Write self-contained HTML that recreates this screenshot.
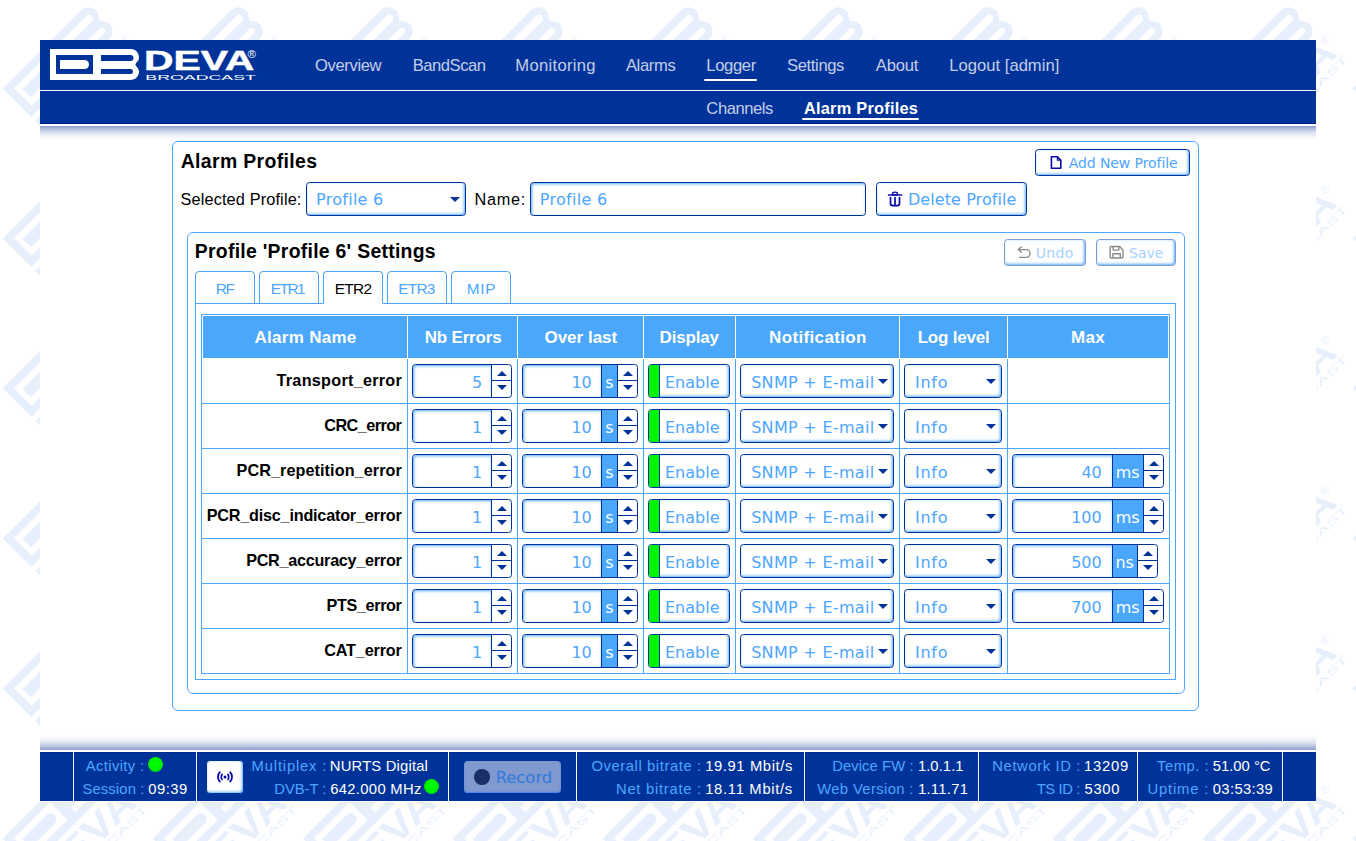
<!DOCTYPE html>
<html lang="en"><head><meta charset="utf-8"><title>Alarm Profiles</title>
<style>
*{box-sizing:border-box;margin:0;padding:0}
html,body{width:1356px;height:841px;overflow:hidden;background:#fff}
body{position:relative;font-family:"Liberation Sans",sans-serif;font-size:16px;color:#000}
.a{position:absolute}
.t{position:absolute;white-space:nowrap;line-height:1}
.dj{font-family:"DejaVu Sans","Liberation Sans",sans-serif}
b{font-weight:bold}
#wm{position:absolute;left:0;top:0;width:1356px;height:841px}
#main{position:absolute;left:40px;top:40px;width:1276px;height:762px;background:#fff}
#hdr{position:absolute;left:40px;top:40px;width:1276px;height:84px;background:#003399}
.box{position:absolute;border:1px solid #4da6ff;background:#fff}
.ctl{position:absolute;border:1px solid #003399;border-radius:3.5px;background:#fff;box-shadow:inset -1px -1px 3px rgba(77,166,255,.95);height:34px;overflow:hidden}
.inp{box-shadow:inset 1px 1px 3px rgba(77,166,255,.95)}
.spn{box-shadow:none}
.spi{position:absolute;left:0;top:0;height:32px;border-radius:3px 0 0 3px;box-shadow:inset 1px 1px 3px rgba(77,166,255,.95)}
.arr{position:absolute;width:0;height:0;border-left:5px solid transparent;border-right:5px solid transparent}
.up{border-bottom:5.5px solid #003399}
.dn{border-top:5.5px solid #003399}
.th{position:absolute;top:316px;height:42px;background:#4ba7fb}
.vl{position:absolute;width:1px;background:#4da6ff}
.hl{position:absolute;height:1px;background:#4da6ff}
.unit{position:absolute;top:0;height:32px;background:#4ba7fb;border-left:1px solid #003399;border-right:1px solid #003399}
#ftr{position:absolute;left:40px;top:752px;width:1276px;height:49px;background:#003399;border-top:1px solid #002890}
.fs{position:absolute;top:-1px;width:1px;height:49px;background:#fff}
.led{position:absolute;border-radius:50%;background:radial-gradient(circle at 50% 45%,#00ff00 0%,#00f200 50%,#00c400 100%)}
</style></head>
<body>
<svg id="wm" width="1356" height="841" viewBox="0 0 1356 841">
<defs><pattern id="wp" width="150" height="150" patternUnits="userSpaceOnUse"><g transform="translate(-147.3,-61.599999999999994) rotate(-45)" fill="#e7effc">
<g transform="scale(1.37,1.31)"><path fill-rule="evenodd" d="M0,0 H80 a8.5,8 0 0 1 6,13.6 l-1.2,1.9 l1.2,1.9 a8.5,8 0 0 1 -6,13.6 H0 z M6,6 V25 H43 V6 z M51,6 V12 H80.5 a3,3 0 0 0 0,-6 z M51,20 V25 H80.5 a2.5,2.5 0 0 0 0,-5 z"/>
<path d="M10,11 H34.5 a4.5,4.5 0 0 1 0,9 H10 z"/></g>
<text x="-3" y="72" font-family="Liberation Sans,sans-serif" font-weight="bold" font-size="37.7" textLength="123" lengthAdjust="spacingAndGlyphs">DEVA</text>
<text x="-1" y="82.5" font-family="Liberation Sans,sans-serif" font-size="9.8" textLength="124" lengthAdjust="spacingAndGlyphs">BROADCAST</text>
<text x="116.5" y="56" font-family="Liberation Sans,sans-serif" font-size="11">®</text></g><g transform="translate(-147.3,88.4) rotate(-45)" fill="#e7effc">
<g transform="scale(1.37,1.31)"><path fill-rule="evenodd" d="M0,0 H80 a8.5,8 0 0 1 6,13.6 l-1.2,1.9 l1.2,1.9 a8.5,8 0 0 1 -6,13.6 H0 z M6,6 V25 H43 V6 z M51,6 V12 H80.5 a3,3 0 0 0 0,-6 z M51,20 V25 H80.5 a2.5,2.5 0 0 0 0,-5 z"/>
<path d="M10,11 H34.5 a4.5,4.5 0 0 1 0,9 H10 z"/></g>
<text x="-3" y="72" font-family="Liberation Sans,sans-serif" font-weight="bold" font-size="37.7" textLength="123" lengthAdjust="spacingAndGlyphs">DEVA</text>
<text x="-1" y="82.5" font-family="Liberation Sans,sans-serif" font-size="9.8" textLength="124" lengthAdjust="spacingAndGlyphs">BROADCAST</text>
<text x="116.5" y="56" font-family="Liberation Sans,sans-serif" font-size="11">®</text></g><g transform="translate(-147.3,238.4) rotate(-45)" fill="#e7effc">
<g transform="scale(1.37,1.31)"><path fill-rule="evenodd" d="M0,0 H80 a8.5,8 0 0 1 6,13.6 l-1.2,1.9 l1.2,1.9 a8.5,8 0 0 1 -6,13.6 H0 z M6,6 V25 H43 V6 z M51,6 V12 H80.5 a3,3 0 0 0 0,-6 z M51,20 V25 H80.5 a2.5,2.5 0 0 0 0,-5 z"/>
<path d="M10,11 H34.5 a4.5,4.5 0 0 1 0,9 H10 z"/></g>
<text x="-3" y="72" font-family="Liberation Sans,sans-serif" font-weight="bold" font-size="37.7" textLength="123" lengthAdjust="spacingAndGlyphs">DEVA</text>
<text x="-1" y="82.5" font-family="Liberation Sans,sans-serif" font-size="9.8" textLength="124" lengthAdjust="spacingAndGlyphs">BROADCAST</text>
<text x="116.5" y="56" font-family="Liberation Sans,sans-serif" font-size="11">®</text></g><g transform="translate(2.7,-61.599999999999994) rotate(-45)" fill="#e7effc">
<g transform="scale(1.37,1.31)"><path fill-rule="evenodd" d="M0,0 H80 a8.5,8 0 0 1 6,13.6 l-1.2,1.9 l1.2,1.9 a8.5,8 0 0 1 -6,13.6 H0 z M6,6 V25 H43 V6 z M51,6 V12 H80.5 a3,3 0 0 0 0,-6 z M51,20 V25 H80.5 a2.5,2.5 0 0 0 0,-5 z"/>
<path d="M10,11 H34.5 a4.5,4.5 0 0 1 0,9 H10 z"/></g>
<text x="-3" y="72" font-family="Liberation Sans,sans-serif" font-weight="bold" font-size="37.7" textLength="123" lengthAdjust="spacingAndGlyphs">DEVA</text>
<text x="-1" y="82.5" font-family="Liberation Sans,sans-serif" font-size="9.8" textLength="124" lengthAdjust="spacingAndGlyphs">BROADCAST</text>
<text x="116.5" y="56" font-family="Liberation Sans,sans-serif" font-size="11">®</text></g><g transform="translate(2.7,88.4) rotate(-45)" fill="#e7effc">
<g transform="scale(1.37,1.31)"><path fill-rule="evenodd" d="M0,0 H80 a8.5,8 0 0 1 6,13.6 l-1.2,1.9 l1.2,1.9 a8.5,8 0 0 1 -6,13.6 H0 z M6,6 V25 H43 V6 z M51,6 V12 H80.5 a3,3 0 0 0 0,-6 z M51,20 V25 H80.5 a2.5,2.5 0 0 0 0,-5 z"/>
<path d="M10,11 H34.5 a4.5,4.5 0 0 1 0,9 H10 z"/></g>
<text x="-3" y="72" font-family="Liberation Sans,sans-serif" font-weight="bold" font-size="37.7" textLength="123" lengthAdjust="spacingAndGlyphs">DEVA</text>
<text x="-1" y="82.5" font-family="Liberation Sans,sans-serif" font-size="9.8" textLength="124" lengthAdjust="spacingAndGlyphs">BROADCAST</text>
<text x="116.5" y="56" font-family="Liberation Sans,sans-serif" font-size="11">®</text></g><g transform="translate(2.7,238.4) rotate(-45)" fill="#e7effc">
<g transform="scale(1.37,1.31)"><path fill-rule="evenodd" d="M0,0 H80 a8.5,8 0 0 1 6,13.6 l-1.2,1.9 l1.2,1.9 a8.5,8 0 0 1 -6,13.6 H0 z M6,6 V25 H43 V6 z M51,6 V12 H80.5 a3,3 0 0 0 0,-6 z M51,20 V25 H80.5 a2.5,2.5 0 0 0 0,-5 z"/>
<path d="M10,11 H34.5 a4.5,4.5 0 0 1 0,9 H10 z"/></g>
<text x="-3" y="72" font-family="Liberation Sans,sans-serif" font-weight="bold" font-size="37.7" textLength="123" lengthAdjust="spacingAndGlyphs">DEVA</text>
<text x="-1" y="82.5" font-family="Liberation Sans,sans-serif" font-size="9.8" textLength="124" lengthAdjust="spacingAndGlyphs">BROADCAST</text>
<text x="116.5" y="56" font-family="Liberation Sans,sans-serif" font-size="11">®</text></g></pattern></defs>
<rect width="1356" height="841" fill="url(#wp)"/></svg>
<div id="main"></div>
<div id="hdr">
<div class="a" style="left:0;top:50px;width:1276px;height:1px;background:#fff"></div>
<svg class="a" style="left:0;top:0" width="240" height="50" viewBox="40 40 240 50">
<path fill="#fff" fill-rule="evenodd" d="M50,49 H130.5 a8.5,8 0 0 1 6,13.6 l-1.2,1.9 l1.2,1.9 a8.5,8 0 0 1 -6,13.6 H50 z
 M56,55 V74 H93 V55 z
 M101,55 V61 H130.5 a3,3 0 0 0 0,-6 z
 M101,69 V74 H130.5 a2.5,2.5 0 0 0 0,-5 z"/>
<path fill="#fff" d="M60,60 H84.5 a4.5,4.5 0 0 1 0,9 H60 z"/>
<text x="143.9" y="70" fill="#fff" stroke="#fff" stroke-width="0.5" font-family="Liberation Sans,sans-serif" font-weight="bold" font-size="27.3" textLength="110.5" lengthAdjust="spacingAndGlyphs">DEVA</text>
<text x="145.3" y="79.7" fill="#fff" font-family="Liberation Sans,sans-serif" font-size="7.4" textLength="110.6" lengthAdjust="spacingAndGlyphs">BROADCAST</text>
<text x="247.4" y="58" fill="#fff" font-family="Liberation Sans,sans-serif" font-size="11.5">®</text>
</svg>
<span class="t" style="left:275.05px;top:18px;font-size:16.6px;letter-spacing:-0.382px;color:#c4cee9;">Overview</span>
<span class="t" style="left:372.77px;top:18px;font-size:16.6px;letter-spacing:-0.486px;color:#c4cee9;">BandScan</span>
<span class="t" style="left:475.37px;top:18px;font-size:16.6px;letter-spacing:0.300px;color:#c4cee9;">Monitoring</span>
<span class="t" style="left:585.90px;top:18px;font-size:16.6px;letter-spacing:-0.369px;color:#c4cee9;">Alarms</span>
<span class="t" style="left:666.27px;top:18px;font-size:16.6px;letter-spacing:-0.346px;color:#c4cee9;">Logger</span>
<span class="t" style="left:747.05px;top:18px;font-size:16.6px;letter-spacing:-0.369px;color:#c4cee9;">Settings</span>
<span class="t" style="left:835.80px;top:18px;font-size:16.6px;letter-spacing:-0.211px;color:#c4cee9;">About</span>
<span class="t" style="left:909.37px;top:18px;font-size:16.6px;letter-spacing:0.008px;color:#c4cee9;">Logout [admin]</span>
<div class="a" style="left:664.4px;top:39px;width:52.6px;height:2px;background:#fff;border-radius:1px"></div>
<span class="t" style="left:666.37px;top:61px;font-size:16.6px;letter-spacing:-0.446px;color:#c4cee9;">Channels</span>
<span class="t" style="left:763.89px;top:60px;font-size:16.4px;letter-spacing:0.229px;color:#fff;"><b>Alarm Profiles</b></span>
<div class="a" style="left:762.3px;top:78px;width:116.8px;height:2px;background:#fff;border-radius:1px"></div>
<div class="a" style="left:0;top:83px;width:1276px;height:1px;background:#002288"></div>
</div>
<div class="a" style="left:40px;top:126px;width:1276px;height:14px;background:linear-gradient(#8b9dcd 0,#b9c4e1 25%,#dde3f0 50%,#f2f4f9 75%,#fff 100%)"></div>
<div class="box" style="left:172px;top:141px;width:1027px;height:570px;border-radius:6px"></div>
<div class="box" style="left:187px;top:232px;width:998px;height:462px;border-radius:6px"></div>
<div class="box" style="left:195px;top:303px;width:981px;height:377px"></div>
<div class="box" style="left:201px;top:314px;width:969px;height:360px"></div>
<span class="t" style="left:180.71px;top:152px;font-size:19.4px;letter-spacing:0.371px;"><b>Alarm Profiles</b></span>
<span class="t" style="left:180.47px;top:191px;font-size:16.3px;letter-spacing:0.147px;">Selected Profile:</span>
<span class="t" style="left:474.50px;top:191px;font-size:16.3px;letter-spacing:0.696px;">Name:</span>
<span class="t" style="left:194.74px;top:242px;font-size:19.4px;letter-spacing:0.280px;"><b>Profile 'Profile 6' Settings</b></span>
<div class="ctl" style="left:306px;top:182px;width:160px;height:34px;"><span class="t dj" style="left:8.98px;top:9px;font-size:16px;letter-spacing:0.290px;color:#4da6ff;">Profile 6</span><i class="arr dn" style="left:143.2px;top:14.0px"></i></div>
<div class="ctl inp" style="left:530px;top:182px;width:336px;height:34px;"><span class="t dj" style="left:8.78px;top:9px;font-size:16px;letter-spacing:0.290px;color:#4da6ff;">Profile 6</span></div>
<div class="ctl" style="left:876px;top:182px;width:151px;height:34px;"><span class="t dj" style="left:30.98px;top:9px;font-size:16px;letter-spacing:0.075px;color:#4da6ff;">Delete Profile</span><svg class="a" style="left:10px;top:7px" width="16" height="17" viewBox="887 190 16 17"><g fill="none" stroke="#0808a8" stroke-width="1.7" stroke-linecap="round" stroke-linejoin="round"><path d="M888.6,195H901.4"/><ellipse cx="895" cy="193.6" rx="2.5" ry="1.5" stroke-width="1.4"/><path d="M890.5,197.6V203.6a2,2 0 0 0 2,2h5a2,2 0 0 0 2,-2V197.6M895,197.6V205.6"/></g></svg></div>
<div class="ctl" style="left:1035px;top:149px;width:155px;height:27px;"><span class="t dj" style="left:32.76px;top:6px;font-size:14px;letter-spacing:-0.086px;color:#4da6ff;">Add New Profile</span><svg class="a" style="left:13px;top:5px" width="14" height="16" viewBox="1049 155 14 16"><g fill="none" stroke="#0a0aa0" stroke-width="1.6" stroke-linejoin="round"><path d="M1051.4,156.7h6l3.4,3.4v8.2h-9.4z"/><path d="M1057.4,156.7v3.4h3.4" stroke-width="1.2"/></g></svg></div>
<div class="ctl" style="left:1004px;top:239px;width:82px;height:27px;border-color:#7f9ad0;"><span class="t dj" style="left:30.71px;top:6px;font-size:14px;letter-spacing:0.317px;color:#a6d2ff;">Undo</span><svg class="a" style="left:11px;top:5px" width="18" height="16" viewBox="1016 245 18 16"><path fill="none" stroke="#8a8a8a" stroke-width="1.4" stroke-linecap="round" stroke-linejoin="round" d="M1019.6,257.4h6.6a3.9,3.9 0 0 0 0,-7.8h-7.8M1021.2,246.9l-2.9,2.7l2.9,2.7"/></svg></div>
<div class="ctl" style="left:1096px;top:239px;width:80px;height:27px;border-color:#7f9ad0;"><span class="t dj" style="left:32.09px;top:6px;font-size:14px;color:#a6d2ff;">Save</span><svg class="a" style="left:11px;top:5px" width="18" height="16" viewBox="1108 245 18 16"><g fill="none" stroke="#8a8a8a" stroke-width="1.4" stroke-linejoin="round"><path d="M1111.3,246.5h8.3l3.4,3.4v6.9a1.2,1.2 0 0 1 -1.2,1.2h-10.5a1.2,1.2 0 0 1 -1.2,-1.2v-9.1a1.2,1.2 0 0 1 1.2,-1.2z"/><path d="M1113.2,246.5v3.6h5.6v-3.6M1112.9,258v-4.3h7.4v4.3"/></g></svg></div>
<div class="box" style="left:195px;top:271px;width:60px;height:33px;border-radius:4px 4px 0 0;"><span class="t" style="left:19.87px;top:9px;font-size:15.4px;letter-spacing:-1.434px;color:#4da6ff;">RF</span></div>
<div class="box" style="left:259px;top:271px;width:60px;height:33px;border-radius:4px 4px 0 0;"><span class="t" style="left:10.77px;top:9px;font-size:15.4px;letter-spacing:-1.474px;color:#4da6ff;">ETR1</span></div>
<div class="box" style="left:323px;top:271px;width:60px;height:33px;border-radius:4px 4px 0 0;border-bottom-color:#fff;"><span class="t" style="left:10.67px;top:9px;font-size:15.4px;letter-spacing:-0.648px;color:#000;">ETR2</span></div>
<div class="box" style="left:387px;top:271px;width:60px;height:33px;border-radius:4px 4px 0 0;"><span class="t" style="left:10.37px;top:9px;font-size:15.4px;letter-spacing:-0.800px;color:#4da6ff;">ETR3</span></div>
<div class="box" style="left:451px;top:271px;width:60px;height:33px;border-radius:4px 4px 0 0;"><span class="t" style="left:14.67px;top:9px;font-size:15.4px;letter-spacing:0.784px;color:#4da6ff;">MIP</span></div>
<div class="th" style="left:203px;width:204px"><span class="t" style="left:51.47px;top:13px;font-size:17px;letter-spacing:0.293px;color:#fff;"><b>Alarm Name</b></span></div>
<div class="th" style="left:408px;width:109px"><span class="t" style="left:16.69px;top:13px;font-size:17px;letter-spacing:-0.186px;color:#fff;"><b>Nb Errors</b></span></div>
<div class="th" style="left:518px;width:125px"><span class="t" style="left:26.42px;top:13px;font-size:17px;letter-spacing:0.009px;color:#fff;"><b>Over last</b></span></div>
<div class="th" style="left:644px;width:91px"><span class="t" style="left:15.60px;top:13px;font-size:17px;letter-spacing:-0.174px;color:#fff;"><b>Display</b></span></div>
<div class="th" style="left:736px;width:163px"><span class="t" style="left:33.10px;top:13px;font-size:17px;letter-spacing:0.348px;color:#fff;"><b>Notification</b></span></div>
<div class="th" style="left:900px;width:107px"><span class="t" style="left:17.69px;top:13px;font-size:17px;letter-spacing:-0.212px;color:#fff;"><b>Log level</b></span></div>
<div class="th" style="left:1008px;width:160px"><span class="t" style="left:62.99px;top:13px;font-size:17px;letter-spacing:0.363px;color:#fff;"><b>Max</b></span></div>
<div class="vl" style="left:407px;top:359px;height:314px"></div>
<div class="vl" style="left:517px;top:359px;height:314px"></div>
<div class="vl" style="left:643px;top:359px;height:314px"></div>
<div class="vl" style="left:735px;top:359px;height:314px"></div>
<div class="vl" style="left:899px;top:359px;height:314px"></div>
<div class="vl" style="left:1007px;top:359px;height:314px"></div>
<div class="hl" style="left:201px;top:403px;width:969px"></div>
<div class="hl" style="left:201px;top:448px;width:969px"></div>
<div class="hl" style="left:201px;top:493px;width:969px"></div>
<div class="hl" style="left:201px;top:538px;width:969px"></div>
<div class="hl" style="left:201px;top:583px;width:969px"></div>
<div class="hl" style="left:201px;top:628px;width:969px"></div>
<span class="t" style="left:276.54px;top:372px;font-size:16.2px;letter-spacing:0.273px;"><b>Transport_error</b></span>
<div class="ctl spn" style="left:412px;top:364px;width:100px;height:34px;"><div class="spi" style="width:78px"></div><div class="a" style="left:78px;top:0;width:1px;height:32px;background:#003399"></div><div class="a" style="left:78px;top:15px;width:21px;height:1px;background:#003399"></div><i class="arr up" style="left:84px;top:5.5px"></i><i class="arr dn" style="left:84px;top:20px"></i><span class="t dj" style="left:58.90px;top:10px;font-size:16px;color:#4da6ff;">5</span></div>
<div class="ctl spn" style="left:522px;top:364px;width:116px;height:34px;"><div class="spi" style="width:78px"></div><div class="a" style="left:94px;top:0;width:1px;height:32px;background:#003399"></div><div class="a" style="left:94px;top:15px;width:21px;height:1px;background:#003399"></div><i class="arr up" style="left:100px;top:5.5px"></i><i class="arr dn" style="left:100px;top:20px"></i><div class="unit" style="left:78px;width:17px"><span class="t dj" style="left:3.26px;top:10px;font-size:16px;color:#fff;">s</span></div><span class="t dj" style="left:48.42px;top:10px;font-size:16px;color:#4da6ff;">10</span></div>
<div class="ctl" style="left:648px;top:364px;width:82px;height:34px;"><div class="a" style="left:0;top:0;width:11px;height:32px;background:#00f600;border-right:1px solid #003399"></div><span class="t dj" style="left:15.98px;top:10px;font-size:16px;color:#4da6ff;">Enable</span></div>
<div class="ctl" style="left:740px;top:364px;width:154px;height:34px;"><span class="t dj" style="left:10.16px;top:10px;font-size:16px;letter-spacing:0.300px;color:#4da6ff;">SNMP + E-mail</span><i class="arr dn" style="left:137.3px;top:14.0px"></i></div>
<div class="ctl" style="left:904px;top:364px;width:98px;height:34px;"><span class="t dj" style="left:10.08px;top:10px;font-size:16px;letter-spacing:0.693px;color:#4da6ff;">Info</span><i class="arr dn" style="left:81.0px;top:14.0px"></i></div>
<span class="t" style="left:324.25px;top:417px;font-size:16.2px;letter-spacing:-0.535px;"><b>CRC_error</b></span>
<div class="ctl spn" style="left:412px;top:409px;width:100px;height:34px;"><div class="spi" style="width:78px"></div><div class="a" style="left:78px;top:0;width:1px;height:32px;background:#003399"></div><div class="a" style="left:78px;top:15px;width:21px;height:1px;background:#003399"></div><i class="arr up" style="left:84px;top:5.5px"></i><i class="arr dn" style="left:84px;top:20px"></i><span class="t dj" style="left:58.98px;top:10px;font-size:16px;color:#4da6ff;">1</span></div>
<div class="ctl spn" style="left:522px;top:409px;width:116px;height:34px;"><div class="spi" style="width:78px"></div><div class="a" style="left:94px;top:0;width:1px;height:32px;background:#003399"></div><div class="a" style="left:94px;top:15px;width:21px;height:1px;background:#003399"></div><i class="arr up" style="left:100px;top:5.5px"></i><i class="arr dn" style="left:100px;top:20px"></i><div class="unit" style="left:78px;width:17px"><span class="t dj" style="left:3.26px;top:10px;font-size:16px;color:#fff;">s</span></div><span class="t dj" style="left:48.42px;top:10px;font-size:16px;color:#4da6ff;">10</span></div>
<div class="ctl" style="left:648px;top:409px;width:82px;height:34px;"><div class="a" style="left:0;top:0;width:11px;height:32px;background:#00f600;border-right:1px solid #003399"></div><span class="t dj" style="left:15.98px;top:10px;font-size:16px;color:#4da6ff;">Enable</span></div>
<div class="ctl" style="left:740px;top:409px;width:154px;height:34px;"><span class="t dj" style="left:10.16px;top:10px;font-size:16px;letter-spacing:0.300px;color:#4da6ff;">SNMP + E-mail</span><i class="arr dn" style="left:137.3px;top:14.0px"></i></div>
<div class="ctl" style="left:904px;top:409px;width:98px;height:34px;"><span class="t dj" style="left:10.08px;top:10px;font-size:16px;letter-spacing:0.693px;color:#4da6ff;">Info</span><i class="arr dn" style="left:81.0px;top:14.0px"></i></div>
<span class="t" style="left:236.55px;top:462px;font-size:16.2px;letter-spacing:0.081px;"><b>PCR_repetition_error</b></span>
<div class="ctl spn" style="left:412px;top:454px;width:100px;height:34px;"><div class="spi" style="width:78px"></div><div class="a" style="left:78px;top:0;width:1px;height:32px;background:#003399"></div><div class="a" style="left:78px;top:15px;width:21px;height:1px;background:#003399"></div><i class="arr up" style="left:84px;top:5.5px"></i><i class="arr dn" style="left:84px;top:20px"></i><span class="t dj" style="left:58.98px;top:10px;font-size:16px;color:#4da6ff;">1</span></div>
<div class="ctl spn" style="left:522px;top:454px;width:116px;height:34px;"><div class="spi" style="width:78px"></div><div class="a" style="left:94px;top:0;width:1px;height:32px;background:#003399"></div><div class="a" style="left:94px;top:15px;width:21px;height:1px;background:#003399"></div><i class="arr up" style="left:100px;top:5.5px"></i><i class="arr dn" style="left:100px;top:20px"></i><div class="unit" style="left:78px;width:17px"><span class="t dj" style="left:3.26px;top:10px;font-size:16px;color:#fff;">s</span></div><span class="t dj" style="left:48.42px;top:10px;font-size:16px;color:#4da6ff;">10</span></div>
<div class="ctl" style="left:648px;top:454px;width:82px;height:34px;"><div class="a" style="left:0;top:0;width:11px;height:32px;background:#00f600;border-right:1px solid #003399"></div><span class="t dj" style="left:15.98px;top:10px;font-size:16px;color:#4da6ff;">Enable</span></div>
<div class="ctl" style="left:740px;top:454px;width:154px;height:34px;"><span class="t dj" style="left:10.16px;top:10px;font-size:16px;letter-spacing:0.300px;color:#4da6ff;">SNMP + E-mail</span><i class="arr dn" style="left:137.3px;top:14.0px"></i></div>
<div class="ctl" style="left:904px;top:454px;width:98px;height:34px;"><span class="t dj" style="left:10.08px;top:10px;font-size:16px;letter-spacing:0.693px;color:#4da6ff;">Info</span><i class="arr dn" style="left:81.0px;top:14.0px"></i></div>
<div class="ctl spn" style="left:1012px;top:454px;width:152px;height:34px;"><div class="spi" style="width:99px"></div><div class="a" style="left:130px;top:0;width:1px;height:32px;background:#003399"></div><div class="a" style="left:130px;top:15px;width:21px;height:1px;background:#003399"></div><i class="arr up" style="left:136px;top:5.5px"></i><i class="arr dn" style="left:136px;top:20px"></i><div class="unit" style="left:99px;width:32px"><span class="t dj" style="left:2.68px;top:10px;font-size:16px;color:#fff;">ms</span></div><span class="t dj" style="left:68.42px;top:10px;font-size:16px;color:#4da6ff;">40</span></div>
<span class="t" style="left:206.65px;top:507px;font-size:16.2px;letter-spacing:-0.201px;"><b>PCR_disc_indicator_error</b></span>
<div class="ctl spn" style="left:412px;top:499px;width:100px;height:34px;"><div class="spi" style="width:78px"></div><div class="a" style="left:78px;top:0;width:1px;height:32px;background:#003399"></div><div class="a" style="left:78px;top:15px;width:21px;height:1px;background:#003399"></div><i class="arr up" style="left:84px;top:5.5px"></i><i class="arr dn" style="left:84px;top:20px"></i><span class="t dj" style="left:58.98px;top:10px;font-size:16px;color:#4da6ff;">1</span></div>
<div class="ctl spn" style="left:522px;top:499px;width:116px;height:34px;"><div class="spi" style="width:78px"></div><div class="a" style="left:94px;top:0;width:1px;height:32px;background:#003399"></div><div class="a" style="left:94px;top:15px;width:21px;height:1px;background:#003399"></div><i class="arr up" style="left:100px;top:5.5px"></i><i class="arr dn" style="left:100px;top:20px"></i><div class="unit" style="left:78px;width:17px"><span class="t dj" style="left:3.26px;top:10px;font-size:16px;color:#fff;">s</span></div><span class="t dj" style="left:48.42px;top:10px;font-size:16px;color:#4da6ff;">10</span></div>
<div class="ctl" style="left:648px;top:499px;width:82px;height:34px;"><div class="a" style="left:0;top:0;width:11px;height:32px;background:#00f600;border-right:1px solid #003399"></div><span class="t dj" style="left:15.98px;top:10px;font-size:16px;color:#4da6ff;">Enable</span></div>
<div class="ctl" style="left:740px;top:499px;width:154px;height:34px;"><span class="t dj" style="left:10.16px;top:10px;font-size:16px;letter-spacing:0.300px;color:#4da6ff;">SNMP + E-mail</span><i class="arr dn" style="left:137.3px;top:14.0px"></i></div>
<div class="ctl" style="left:904px;top:499px;width:98px;height:34px;"><span class="t dj" style="left:10.08px;top:10px;font-size:16px;letter-spacing:0.693px;color:#4da6ff;">Info</span><i class="arr dn" style="left:81.0px;top:14.0px"></i></div>
<div class="ctl spn" style="left:1012px;top:499px;width:152px;height:34px;"><div class="spi" style="width:99px"></div><div class="a" style="left:130px;top:0;width:1px;height:32px;background:#003399"></div><div class="a" style="left:130px;top:15px;width:21px;height:1px;background:#003399"></div><i class="arr up" style="left:136px;top:5.5px"></i><i class="arr dn" style="left:136px;top:20px"></i><div class="unit" style="left:99px;width:32px"><span class="t dj" style="left:2.68px;top:10px;font-size:16px;color:#fff;">ms</span></div><span class="t dj" style="left:58.18px;top:10px;font-size:16px;color:#4da6ff;">100</span></div>
<span class="t" style="left:246.15px;top:552px;font-size:16.2px;letter-spacing:-0.265px;"><b>PCR_accuracy_error</b></span>
<div class="ctl spn" style="left:412px;top:544px;width:100px;height:34px;"><div class="spi" style="width:78px"></div><div class="a" style="left:78px;top:0;width:1px;height:32px;background:#003399"></div><div class="a" style="left:78px;top:15px;width:21px;height:1px;background:#003399"></div><i class="arr up" style="left:84px;top:5.5px"></i><i class="arr dn" style="left:84px;top:20px"></i><span class="t dj" style="left:58.98px;top:10px;font-size:16px;color:#4da6ff;">1</span></div>
<div class="ctl spn" style="left:522px;top:544px;width:116px;height:34px;"><div class="spi" style="width:78px"></div><div class="a" style="left:94px;top:0;width:1px;height:32px;background:#003399"></div><div class="a" style="left:94px;top:15px;width:21px;height:1px;background:#003399"></div><i class="arr up" style="left:100px;top:5.5px"></i><i class="arr dn" style="left:100px;top:20px"></i><div class="unit" style="left:78px;width:17px"><span class="t dj" style="left:3.26px;top:10px;font-size:16px;color:#fff;">s</span></div><span class="t dj" style="left:48.42px;top:10px;font-size:16px;color:#4da6ff;">10</span></div>
<div class="ctl" style="left:648px;top:544px;width:82px;height:34px;"><div class="a" style="left:0;top:0;width:11px;height:32px;background:#00f600;border-right:1px solid #003399"></div><span class="t dj" style="left:15.98px;top:10px;font-size:16px;color:#4da6ff;">Enable</span></div>
<div class="ctl" style="left:740px;top:544px;width:154px;height:34px;"><span class="t dj" style="left:10.16px;top:10px;font-size:16px;letter-spacing:0.300px;color:#4da6ff;">SNMP + E-mail</span><i class="arr dn" style="left:137.3px;top:14.0px"></i></div>
<div class="ctl" style="left:904px;top:544px;width:98px;height:34px;"><span class="t dj" style="left:10.08px;top:10px;font-size:16px;letter-spacing:0.693px;color:#4da6ff;">Info</span><i class="arr dn" style="left:81.0px;top:14.0px"></i></div>
<div class="ctl spn" style="left:1012px;top:544px;width:146px;height:34px;"><div class="spi" style="width:99px"></div><div class="a" style="left:124px;top:0;width:1px;height:32px;background:#003399"></div><div class="a" style="left:124px;top:15px;width:21px;height:1px;background:#003399"></div><i class="arr up" style="left:130px;top:5.5px"></i><i class="arr dn" style="left:130px;top:20px"></i><div class="unit" style="left:99px;width:26px"><span class="t dj" style="left:2.40px;top:10px;font-size:16px;color:#fff;">ns</span></div><span class="t dj" style="left:58.18px;top:10px;font-size:16px;color:#4da6ff;">500</span></div>
<span class="t" style="left:326.55px;top:597px;font-size:16.2px;letter-spacing:-0.366px;"><b>PTS_error</b></span>
<div class="ctl spn" style="left:412px;top:589px;width:100px;height:34px;"><div class="spi" style="width:78px"></div><div class="a" style="left:78px;top:0;width:1px;height:32px;background:#003399"></div><div class="a" style="left:78px;top:15px;width:21px;height:1px;background:#003399"></div><i class="arr up" style="left:84px;top:5.5px"></i><i class="arr dn" style="left:84px;top:20px"></i><span class="t dj" style="left:58.98px;top:10px;font-size:16px;color:#4da6ff;">1</span></div>
<div class="ctl spn" style="left:522px;top:589px;width:116px;height:34px;"><div class="spi" style="width:78px"></div><div class="a" style="left:94px;top:0;width:1px;height:32px;background:#003399"></div><div class="a" style="left:94px;top:15px;width:21px;height:1px;background:#003399"></div><i class="arr up" style="left:100px;top:5.5px"></i><i class="arr dn" style="left:100px;top:20px"></i><div class="unit" style="left:78px;width:17px"><span class="t dj" style="left:3.26px;top:10px;font-size:16px;color:#fff;">s</span></div><span class="t dj" style="left:48.42px;top:10px;font-size:16px;color:#4da6ff;">10</span></div>
<div class="ctl" style="left:648px;top:589px;width:82px;height:34px;"><div class="a" style="left:0;top:0;width:11px;height:32px;background:#00f600;border-right:1px solid #003399"></div><span class="t dj" style="left:15.98px;top:10px;font-size:16px;color:#4da6ff;">Enable</span></div>
<div class="ctl" style="left:740px;top:589px;width:154px;height:34px;"><span class="t dj" style="left:10.16px;top:10px;font-size:16px;letter-spacing:0.300px;color:#4da6ff;">SNMP + E-mail</span><i class="arr dn" style="left:137.3px;top:14.0px"></i></div>
<div class="ctl" style="left:904px;top:589px;width:98px;height:34px;"><span class="t dj" style="left:10.08px;top:10px;font-size:16px;letter-spacing:0.693px;color:#4da6ff;">Info</span><i class="arr dn" style="left:81.0px;top:14.0px"></i></div>
<div class="ctl spn" style="left:1012px;top:589px;width:152px;height:34px;"><div class="spi" style="width:99px"></div><div class="a" style="left:130px;top:0;width:1px;height:32px;background:#003399"></div><div class="a" style="left:130px;top:15px;width:21px;height:1px;background:#003399"></div><i class="arr up" style="left:136px;top:5.5px"></i><i class="arr dn" style="left:136px;top:20px"></i><div class="unit" style="left:99px;width:32px"><span class="t dj" style="left:2.68px;top:10px;font-size:16px;color:#fff;">ms</span></div><span class="t dj" style="left:58.18px;top:10px;font-size:16px;color:#4da6ff;">700</span></div>
<span class="t" style="left:324.25px;top:642px;font-size:16.2px;letter-spacing:-0.160px;"><b>CAT_error</b></span>
<div class="ctl spn" style="left:412px;top:634px;width:100px;height:34px;"><div class="spi" style="width:78px"></div><div class="a" style="left:78px;top:0;width:1px;height:32px;background:#003399"></div><div class="a" style="left:78px;top:15px;width:21px;height:1px;background:#003399"></div><i class="arr up" style="left:84px;top:5.5px"></i><i class="arr dn" style="left:84px;top:20px"></i><span class="t dj" style="left:58.98px;top:10px;font-size:16px;color:#4da6ff;">1</span></div>
<div class="ctl spn" style="left:522px;top:634px;width:116px;height:34px;"><div class="spi" style="width:78px"></div><div class="a" style="left:94px;top:0;width:1px;height:32px;background:#003399"></div><div class="a" style="left:94px;top:15px;width:21px;height:1px;background:#003399"></div><i class="arr up" style="left:100px;top:5.5px"></i><i class="arr dn" style="left:100px;top:20px"></i><div class="unit" style="left:78px;width:17px"><span class="t dj" style="left:3.26px;top:10px;font-size:16px;color:#fff;">s</span></div><span class="t dj" style="left:48.42px;top:10px;font-size:16px;color:#4da6ff;">10</span></div>
<div class="ctl" style="left:648px;top:634px;width:82px;height:34px;"><div class="a" style="left:0;top:0;width:11px;height:32px;background:#00f600;border-right:1px solid #003399"></div><span class="t dj" style="left:15.98px;top:10px;font-size:16px;color:#4da6ff;">Enable</span></div>
<div class="ctl" style="left:740px;top:634px;width:154px;height:34px;"><span class="t dj" style="left:10.16px;top:10px;font-size:16px;letter-spacing:0.300px;color:#4da6ff;">SNMP + E-mail</span><i class="arr dn" style="left:137.3px;top:14.0px"></i></div>
<div class="ctl" style="left:904px;top:634px;width:98px;height:34px;"><span class="t dj" style="left:10.08px;top:10px;font-size:16px;letter-spacing:0.693px;color:#4da6ff;">Info</span><i class="arr dn" style="left:81.0px;top:14.0px"></i></div>
<div class="a" style="left:40px;top:735px;width:1276px;height:15px;background:linear-gradient(#fff 0,#f2f4f9 25%,#dde3f0 50%,#b9c4e1 75%,#8b9dcd 100%)"></div>
<div id="ftr">
<div class="fs" style="left:33px"></div>
<div class="fs" style="left:156px"></div>
<div class="fs" style="left:408px"></div>
<div class="fs" style="left:536px"></div>
<div class="fs" style="left:764px"></div>
<div class="fs" style="left:938px"></div>
<div class="fs" style="left:1097px"></div>
<div class="fs" style="left:1242px"></div>
<span class="t" style="left:45.80px;top:6px;font-size:14.8px;letter-spacing:0.356px;color:#4da6ff;">Activity :</span>
<span class="t" style="left:42.43px;top:29px;font-size:14.8px;letter-spacing:0.137px;color:#4da6ff;">Session :</span>
<span class="t" style="left:108.21px;top:29px;font-size:14.8px;letter-spacing:0.514px;color:#fff;">09:39</span>
<div class="led" style="left:107.9px;top:4.0px;width:15px;height:15px"></div>
<div class="a" style="left:166px;top:7px;width:38px;height:34px;background:#fff;border:1px solid #003399;border-radius:4px;box-shadow:inset -1px -1px 3px rgba(77,166,255,.95)">
<svg class="a" style="left:8px;top:7px" width="20" height="18" viewBox="215 768 20 18"><g fill="none" stroke="#0808a8" stroke-width="1.8"><path d="M220.3,771.7A7,7 0 0 0 220.3,782.1"/><path d="M229.7,771.7A7,7 0 0 1 229.7,782.1"/><path d="M222.56,774A3.8,3.8 0 0 0 222.56,779.8" stroke-width="1.7"/><path d="M227.44,774A3.8,3.8 0 0 1 227.44,779.8" stroke-width="1.7"/></g><circle cx="225" cy="776.9" r="1.5" fill="#0808a8"/></svg></div>
<span class="t" style="left:211.62px;top:6px;font-size:14.8px;letter-spacing:0.814px;color:#4da6ff;">Multiplex :</span>
<span class="t" style="left:289.82px;top:6px;font-size:14.8px;letter-spacing:0.178px;color:#fff;">NURTS Digital</span>
<span class="t" style="left:234.32px;top:29px;font-size:14.8px;letter-spacing:-0.046px;color:#4da6ff;">DVB-T :</span>
<span class="t" style="left:290.26px;top:29px;font-size:14.8px;letter-spacing:0.312px;color:#fff;">642.000 MHz</span>
<div class="led" style="left:383.8px;top:25.8px;width:15px;height:15px"></div>
<div class="a" style="left:424px;top:8px;width:97px;height:32px;background:#8099cf;border-radius:4px;box-shadow:inset 0 -1px 1.5px rgba(60,130,235,.9)">
<div class="a" style="left:10.25px;top:8.25px;width:15.3px;height:15.3px;border-radius:50%;background:#1a2f66"></div><span class="t dj" style="left:31.64px;top:9px;font-size:16.4px;color:#2f7ade;">Record</span></div>
<span class="t" style="left:551.43px;top:6px;font-size:14.8px;letter-spacing:0.580px;color:#4da6ff;">Overall bitrate :</span>
<span class="t" style="left:665.19px;top:6px;font-size:14.8px;letter-spacing:0.595px;color:#fff;">19.91 Mbit/s</span>
<span class="t" style="left:576.02px;top:29px;font-size:14.8px;letter-spacing:0.717px;color:#4da6ff;">Net bitrate :</span>
<span class="t" style="left:665.19px;top:29px;font-size:14.8px;letter-spacing:0.689px;color:#fff;">18.11 Mbit/s</span>
<span class="t" style="left:792.22px;top:6px;font-size:14.8px;letter-spacing:0.073px;color:#4da6ff;">Device FW :</span>
<span class="t" style="left:877.89px;top:6px;font-size:14.8px;letter-spacing:0.077px;color:#fff;">1.0.1.1</span>
<span class="t" style="left:777.13px;top:29px;font-size:14.8px;letter-spacing:0.375px;color:#4da6ff;">Web Version :</span>
<span class="t" style="left:877.89px;top:29px;font-size:14.8px;letter-spacing:0.305px;color:#fff;">1.11.71</span>
<span class="t" style="left:952.22px;top:6px;font-size:14.8px;letter-spacing:0.622px;color:#4da6ff;">Network ID :</span>
<span class="t" style="left:1043.99px;top:6px;font-size:14.8px;letter-spacing:0.783px;color:#fff;">13209</span>
<span class="t" style="left:996.70px;top:29px;font-size:14.8px;letter-spacing:-0.379px;color:#4da6ff;">TS ID :</span>
<span class="t" style="left:1044.51px;top:29px;font-size:14.8px;letter-spacing:0.693px;color:#fff;">5300</span>
<span class="t" style="left:1117.10px;top:6px;font-size:14.8px;letter-spacing:0.481px;color:#4da6ff;">Temp. :</span>
<span class="t" style="left:1172.81px;top:6px;font-size:14.8px;color:#fff;">51.00 °C</span>
<span class="t" style="left:1107.39px;top:29px;font-size:14.8px;letter-spacing:0.859px;color:#4da6ff;">Uptime :</span>
<span class="t" style="left:1172.81px;top:29px;font-size:14.8px;letter-spacing:0.341px;color:#fff;">03:53:39</span>
</div>
</body></html>
